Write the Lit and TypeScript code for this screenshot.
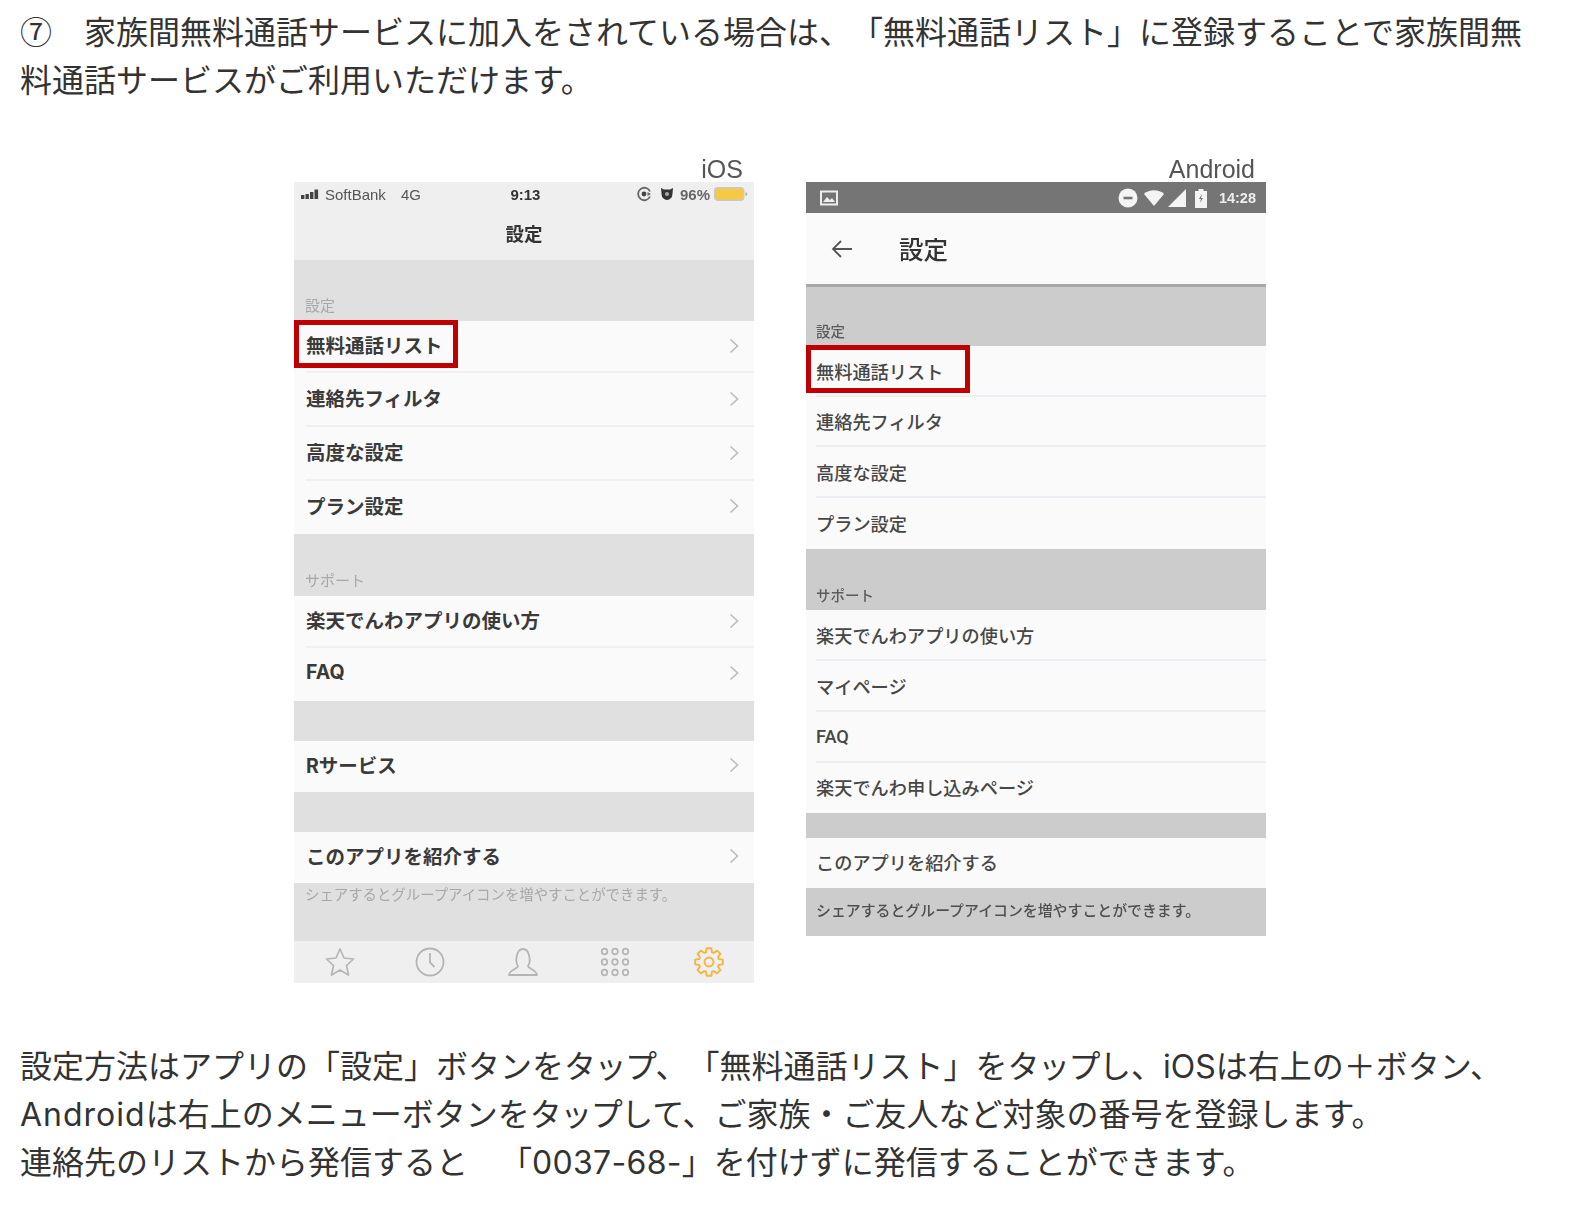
import { LitElement, html, css, svg } from "lit";
import { customElement } from "lit/decorators.js";

type Row = { t: string; h: number; mark?: boolean };
type Block =
  | { kind: "gap"; h: number; label?: string }
  | { kind: "note"; h: number; label: string }
  | { kind: "rows"; rows: Row[] };

const iosBlocks: Block[] = [
  { kind: "gap", h: 61, label: "設定" },
  { kind: "rows", rows: [
    { t: "無料通話リスト", h: 52, mark: true },
    { t: "連絡先フィルタ", h: 54 },
    { t: "高度な設定", h: 54 },
    { t: "プラン設定", h: 53 },
  ] },
  { kind: "gap", h: 62, label: "サポート" },
  { kind: "rows", rows: [
    { t: "楽天でんわアプリの使い方", h: 52 },
    { t: "FAQ", h: 53 },
  ] },
  { kind: "gap", h: 40 },
  { kind: "rows", rows: [{ t: "Rサービス", h: 51 }] },
  { kind: "gap", h: 40 },
  { kind: "rows", rows: [{ t: "このアプリを紹介する", h: 51 }] },
  { kind: "note", h: 58, label: "シェアするとグループアイコンを増やすことができます。" },
];

const androidBlocks: Block[] = [
  { kind: "gap", h: 59, label: "設定" },
  { kind: "rows", rows: [
    { t: "無料通話リスト", h: 51, mark: true },
    { t: "連絡先フィルタ", h: 50 },
    { t: "高度な設定", h: 51 },
    { t: "プラン設定", h: 51 },
  ] },
  { kind: "gap", h: 61, label: "サポート" },
  { kind: "rows", rows: [
    { t: "楽天でんわアプリの使い方", h: 51 },
    { t: "マイページ", h: 51 },
    { t: "FAQ", h: 51 },
    { t: "楽天でんわ申し込みページ", h: 50 },
  ] },
  { kind: "gap", h: 25 },
  { kind: "rows", rows: [{ t: "このアプリを紹介する", h: 50 }] },
  { kind: "note", h: 48, label: "シェアするとグループアイコンを増やすことができます。" },
];

const chevron = html`<svg class="chev" viewBox="0 0 10 16"><path d="M1.5 1.5 8.5 8 1.5 14.5" fill="none" stroke="#bdbdbd" stroke-width="1.7"/></svg>`;

const gearPath = (() => {
  const pts: string[] = [];
  for (let i = 0; i < 8; i++) {
    const a = (i * Math.PI) / 4 - Math.PI / 2;
    const p = (r: number, d: number) =>
      `${(15 + r * Math.cos(a + d)).toFixed(2)} ${(15 + r * Math.sin(a + d)).toFixed(2)}`;
    pts.push(`${i === 0 ? "M" : "L"}${p(10.2, -0.3)}`);
    pts.push(`L${p(14, -0.17)}`);
    pts.push(`L${p(14, 0.17)}`);
    pts.push(`L${p(10.2, 0.3)}`);
  }
  return pts.join(" ") + " Z";
})();

const dots = [4.5, 15, 25.5].flatMap((y) =>
  [4.5, 15, 25.5].map((x) => svg`<circle cx=${x} cy=${y} r="2.8" fill="none" stroke="#b5b5b5" stroke-width="1.7"/>`)
);

@customElement("app-root")
export class AppRoot extends LitElement {
  static styles = css`
    :host {
      display: block;
      width: 1578px;
      height: 1232px;
      background: #fff;
      overflow: hidden;
      font-family: "Liberation Sans", "Noto Sans CJK JP", sans-serif;
      color: #333;
      text-spacing-trim: space-all;
    }
    .page { padding: 9px 20px 0; }
    p {
      margin: 0;
      font-family: Inter, "Noto Sans CJK JP", sans-serif;
      font-size: 32px;
      font-weight: 400;
      line-height: 48px;
      white-space: nowrap;
      color: #333;
    }
    .cjk { font-family: "Noto Sans CJK JP", sans-serif; line-height: 0; }
    .tight { letter-spacing: -1.5px; }
    .wide { letter-spacing: 1px; }
    .nums { letter-spacing: 0.3px; }
    .shots {
      display: flex;
      gap: 52px;
      margin: 51px 0 60px 274px;
    }
    .shot { width: 460px; display: flex; flex-direction: column; filter: blur(0.6px); }
    .cap {
      height: 26px;
      line-height: 26px;
      font-size: 25px;
      color: #555;
      text-align: right;
      padding-right: 11px;
    }
    .screen { display: flex; flex-direction: column; }
    .row {
      position: relative;
      display: flex;
      align-items: center;
      justify-content: space-between;
      box-sizing: border-box;
      background: #fafafa;
      padding-left: 12px;
    }
    .row .txt { flex: 1; }
    .row.sep::after {
      content: "";
      position: absolute;
      left: 12px;
      right: 0;
      bottom: 0;
      height: 2px;
    }
    .mark {
      position: absolute;
      left: 0;
      top: -1px;
      width: 164px;
      height: 48px;
      box-sizing: border-box;
      border: 5px solid #c00000;
    }
    .gap { display: flex; align-items: flex-end; box-sizing: border-box; padding-left: 11px; }
    .note { display: flex; align-items: flex-start; box-sizing: border-box; padding-left: 11px; }

    /* iOS */
    .ios .row {
      font-family: Inter, "Noto Sans CJK JP", sans-serif;
      font-size: 19.5px;
      font-weight: 700;
      color: #3a3a3a;
      padding-right: 15px;
      padding-bottom: 5px;
    }
    .ios .row.sep::after { background: #f0f0f0; }
    .ios .gap { background: #e0e0e0; font-size: 15px; color: #a8a8a8; padding-bottom: 6px; }
    .ios .note { background: #e0e0e0; font-size: 14.4px; color: #a8a8a8; padding-top: 4px; line-height: 17px; }
    .chev { width: 10px; height: 16px; position: relative; top: 1px; }
    .ios-status {
      height: 26px;
      background: #efefef;
      display: flex;
      align-items: center;
      padding: 0 6px 2px 7px;
      box-sizing: border-box;
      font-size: 15px;
      color: #555;
    }
    .ios-status .carrier { margin-left: 3px; }
    .ios-status .net { margin-left: 15px; }
    .ios-status .clock {
      flex: 1;
      text-align: center;
      font-weight: 700;
      color: #333;
      padding-right: 6px;
    }
    .ios-status .pct { font-size: 15px; margin: 0 4px 0 6px; font-weight: 700; color: #666; }
    .ios-status svg { display: block; }
    .ios-status .si { margin-left: 8px; }
    .ios-nav {
      height: 52px;
      background: #efefef;
      display: flex;
      align-items: center;
      justify-content: center;
      font-size: 18.5px;
      font-weight: 700;
      color: #333;
      padding-bottom: 3px;
      box-sizing: border-box;
    }
    .tabs {
      height: 42px;
      background: #efefef;
      display: grid;
      grid-template-columns: 92px 88px 98px 86px 102px;
      align-items: center;
      justify-items: center;
    }
    .tabs svg { width: 30px; height: 30px; }

    /* Android */
    .android .row {
      font-family: Roboto, "Noto Sans CJK JP", sans-serif;
      font-size: 18.2px;
      font-weight: 500;
      color: #474747;
      padding-left: 10px;
      padding-bottom: 2px;
    }
    .android .row.sep::after { left: 10px; background: #ebeef2; }
    .android .gap { background: #cccccc; font-size: 14.5px; font-weight: 500; color: #5c5c5c; padding-bottom: 5px; padding-left: 10px; }
    .android .note { background: #cccccc; font-size: 14.9px; font-weight: 500; color: #4f4f4f; padding: 15px 0 0 10px; line-height: 17px; height: 48px; }
    .a-status {
      height: 31px;
      background: #757575;
      display: flex;
      align-items: center;
      padding: 0 10px 0 14px;
      box-sizing: border-box;
      color: #eee;
      font-size: 14.5px;
      font-weight: 700;
    }
    .a-status .grow { flex: 1; }
    .a-status svg { display: block; margin-right: 4px; }
    .a-status .wifi { margin-left: 2px; }
    .a-status .bars { margin-right: 9px; }
    .a-status .time { margin-left: 8px; }
    .a-nav {
      height: 74px;
      box-sizing: border-box;
      background: #fafafa;
      border-bottom: 3px solid #a8a8a8;
      display: flex;
      align-items: center;
      padding-left: 25px;
      gap: 46px;
      font-size: 24.5px;
      font-weight: 500;
      color: #333;
    }
    .a-nav svg { width: 22px; height: 20px; }
  `;

  private renderBlocks(blocks: Block[], chev: unknown) {
    return blocks.map((b) => {
      if (b.kind === "gap") {
        return html`<div class="gap" style="height:${b.h}px">${b.label ?? ""}</div>`;
      }
      if (b.kind === "note") {
        return html`<div class="note" style="height:${b.h}px">${b.label}</div>`;
      }
      return b.rows.map(
        (r, i) => html`<div class="row ${i < b.rows.length - 1 ? "sep" : ""}" style="height:${r.h}px">
          <span class="txt">${r.t}</span>
          ${chev}
          ${r.mark ? html`<div class="mark"></div>` : ""}
        </div>`
      );
    });
  }

  private renderIos() {
    return html`<div class="shot ios">
      <div class="cap">iOS</div>
      <div class="screen">
        <div class="ios-status">
          <svg width="21" height="10" viewBox="0 0 21 10" fill="#444">
            <rect x="0" y="6" width="3.4" height="4" /><rect x="4.5" y="5" width="3.4" height="5" />
            <rect x="9" y="3" width="3.4" height="7" /><rect x="13.5" y="0.5" width="3.6" height="9.5" />
          </svg>
          <span class="carrier">SoftBank</span><span class="net">4G</span>
          <span class="clock">9:13</span>
          <svg width="16" height="16" viewBox="0 0 16 16">
            <path d="M14 5.5A6.2 6.2 0 1 0 14 10.5" fill="none" stroke="#666" stroke-width="1.8" /><circle cx="8" cy="8" r="2.4" fill="#444" /><path d="M11.5 6 15 8 11.5 10Z" fill="#666"/>
          </svg>
          <svg class="si" width="14" height="14" viewBox="0 0 14 14">
            <path d="M1 1 4 2.4H10L13 1 12.4 7.5A5.4 5.4 0 0 1 1.6 7.5Z" fill="#333" /><circle cx="7" cy="7" r="2" fill="#aaa" />
          </svg>
          <span class="pct">96%</span>
          <svg width="34" height="16" viewBox="0 0 34 16">
            <rect x="0.7" y="1.7" width="29" height="12.5" rx="3" fill="#f6c944" stroke="#c9c9c9" stroke-width="1.4" />
            <path d="M31.5 5.5 33.5 8 31.5 10.5Z" fill="#aaa" />
          </svg>
        </div>
        <div class="ios-nav">設定</div>
        ${this.renderBlocks(iosBlocks, chevron)}
        <div class="tabs">
          <svg viewBox="0 0 30 30"><path d="M15 2 19 11 28.5 12 21.5 18.5 23.5 28 15 23 6.5 28 8.5 18.5 1.5 12 11 11Z" fill="none" stroke="#b5b5b5" stroke-width="1.7" stroke-linejoin="round"/></svg>
          <svg viewBox="0 0 30 30"><circle cx="15" cy="15" r="13.5" fill="none" stroke="#b5b5b5" stroke-width="1.8"/><path d="M15 6V15.5L19.5 20" fill="none" stroke="#b5b5b5" stroke-width="1.8"/></svg>
          <svg viewBox="0 0 30 30"><path d="M10 19C7 15 8 2 15 2S23 15 20 19C20 21.5 29 23 29 28H1C1 23 10 21.5 10 19Z" fill="none" stroke="#b5b5b5" stroke-width="1.8" stroke-linejoin="round"/></svg>
          <svg viewBox="0 0 30 30">${dots}</svg>
          <svg viewBox="0 0 30 30"><path d=${gearPath} fill="none" stroke="#f3b53f" stroke-width="1.9" stroke-linejoin="round"/><circle cx="15" cy="15" r="4.5" fill="none" stroke="#f3b53f" stroke-width="1.9"/></svg>
        </div>
      </div>
    </div>`;
  }

  private renderAndroid() {
    return html`<div class="shot android">
      <div class="cap">Android</div>
      <div class="screen">
        <div class="a-status">
          <svg width="18" height="16" viewBox="0 0 18 16">
            <rect x="1" y="1.5" width="16" height="13" fill="none" stroke="#eee" stroke-width="2"/>
            <path d="M3 12 7 7 10 10 12 8 15 12Z" fill="#eee"/>
          </svg>
          <span class="grow"></span>
          <svg width="20" height="20" viewBox="0 0 20 20"><circle cx="10" cy="10" r="9.5" fill="#f4f4f4"/><rect x="5.5" y="8.7" width="9" height="2.6" fill="#757575"/></svg>
          <svg class="wifi" width="20" height="16" viewBox="0 0 20 16"><path d="M0 4C5 -1 15 -1 20 4L10 16Z" fill="#f4f4f4"/></svg>
          <svg class="bars" width="18" height="18" viewBox="0 0 18 18"><path d="M18 0V18H0Z" fill="#f4f4f4"/></svg>
          <svg width="12" height="20" viewBox="0 0 12 20"><path d="M3.5 1H8.5V3H12V20H0V3H3.5Z" fill="#f4f4f4"/><path d="M7 6 4 11H6L5 15 8 10H6Z" fill="#757575"/></svg>
          <span class="time">14:28</span>
        </div>
        <div class="a-nav">
          <svg viewBox="0 0 22 20"><path d="M21 10H2M10 2 2 10 10 18" fill="none" stroke="#555" stroke-width="1.8"/></svg>
          <span>設定</span>
        </div>
        ${this.renderBlocks(androidBlocks, "")}
      </div>
    </div>`;
  }

  render() {
    return html`<div class="page">
      <p><span class="cjk">⑦</span>　家族間無料通話サービスに加入をされている場合は、「無料通話リスト」に登録することで家族間無<br />料通話サービスがご利用いただけます。</p>
      <div class="shots">
        ${this.renderIos()}
        ${this.renderAndroid()}
      </div>
      <p>設定方法はアプリの「設定」ボタンを<span class="tight">タップ</span>、「無料通話リスト」を<span class="tight">タップ</span>し、iOSは右上の＋ボタン、<br /><span class="wide">Android</span>は右上のメニューボタンを<span class="tight">タップ</span>して、ご家族・ご友人など対象の番号を登録します。<br />連絡先のリストから発信すると　「<span class="nums">0037-68-</span>」を付けずに発信することができます。</p>
    </div>`;
  }
}
